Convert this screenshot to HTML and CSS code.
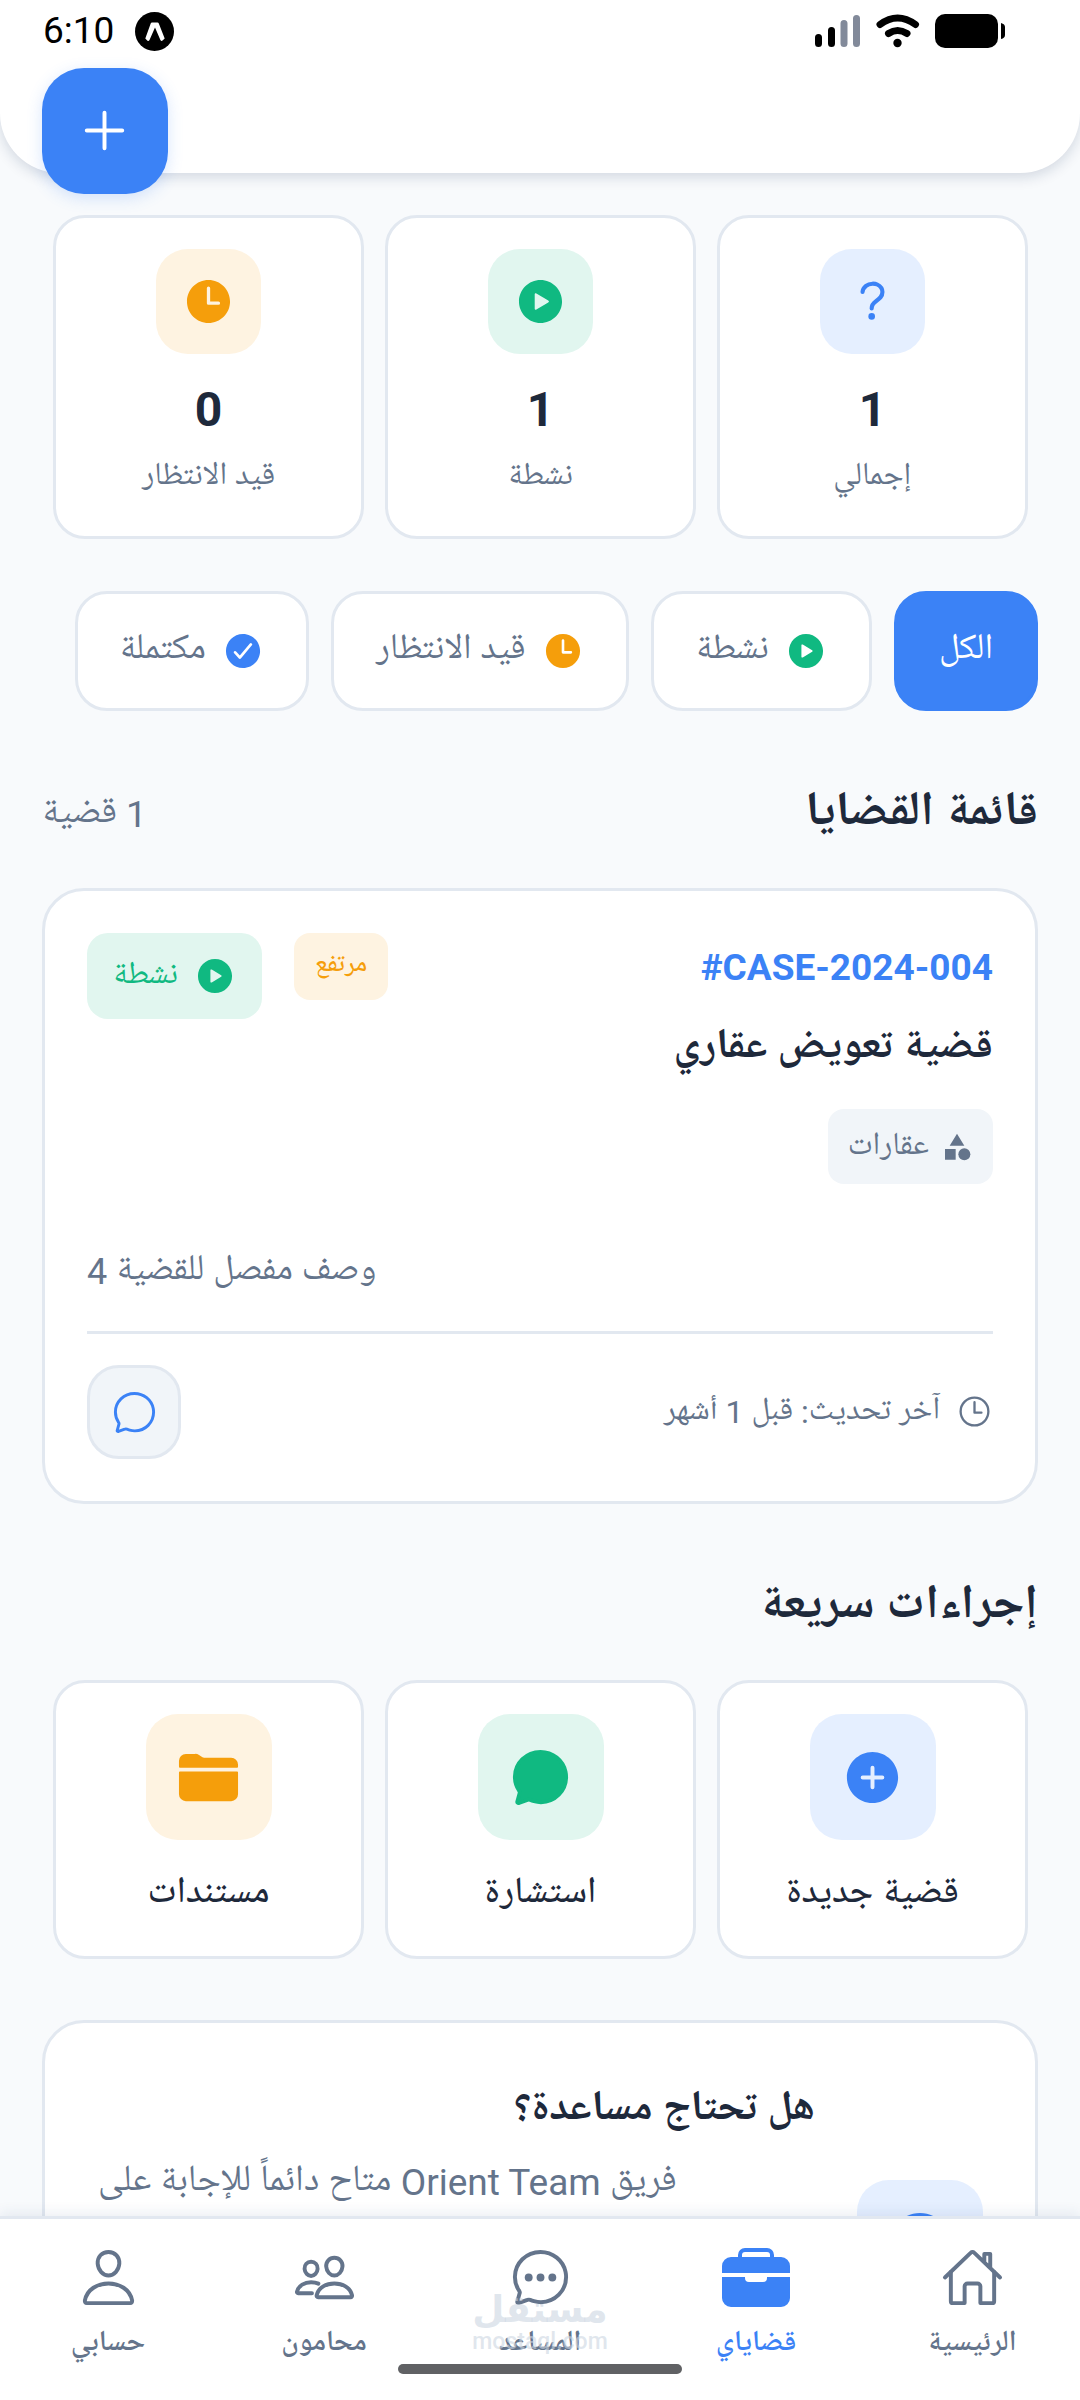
FILE: index.html
```html
<!DOCTYPE html>
<html lang="ar" dir="rtl">
<head>
<meta charset="utf-8">
<meta name="viewport" content="width=device-width, initial-scale=1">
<title>قضاياي</title>
<link rel="stylesheet" href="styles.css">
</head>
<body>
<svg class="sprite" aria-hidden="true">
  <symbol id="i-play" viewBox="0 0 512 512"><path fill="currentColor" d="M256,48C141.31,48,48,141.31,48,256s93.31,208,208,208,208-93.31,208-208S370.69,48,256,48Zm74.77,217.3L216.32,334.44a10.78,10.78,0,0,1-16.32-9.31V186.87a10.78,10.78,0,0,1,16.32-9.31L330.77,246.7A10.89,10.89,0,0,1,330.77,265.3Z"/></symbol>
  <symbol id="i-time" viewBox="0 0 512 512"><path fill="currentColor" d="M256,48C141.13,48,48,141.13,48,256s93.13,208,208,208,208-93.13,208-208S370.87,48,256,48Zm96,240H256a16,16,0,0,1-16-16V128a16,16,0,0,1,32,0V256h80a16,16,0,0,1,0,32Z"/></symbol>
  <symbol id="i-check" viewBox="0 0 512 512"><path fill="currentColor" d="M256,48C141.31,48,48,141.31,48,256s93.31,208,208,208,208-93.31,208-208S370.69,48,256,48ZM364.25,186.29l-134.4,160a16,16,0,0,1-12,5.71h-.27a16,16,0,0,1-11.89-5.3l-57.6-64a16,16,0,1,1,23.78-21.4l45.29,50.32L339.75,165.71a16,16,0,0,1,24.5,20.58Z"/></symbol>
  <symbol id="i-add-circle" viewBox="0 0 512 512"><path fill="currentColor" d="M256,48C141.31,48,48,141.31,48,256s93.31,208,208,208,208-93.31,208-208S370.69,48,256,48Zm80,224H272v64a16,16,0,0,1-32,0V272H176a16,16,0,0,1,0-32h64V176a16,16,0,0,1,32,0v64h64a16,16,0,0,1,0,32Z"/></symbol>
  <symbol id="i-folder" viewBox="0 0 512 512"><path fill="currentColor" d="M496,152a56,56,0,0,0-56-56H220.11a23.89,23.89,0,0,1-13.31-4L179,73.41A55.77,55.77,0,0,0,147.89,64H72A56,56,0,0,0,16,120v48a8,8,0,0,0,8,8H488a8,8,0,0,0,8-8ZM16,392a56,56,0,0,0,56,56H440a56,56,0,0,0,56-56V216a8,8,0,0,0-8-8H24a8,8,0,0,0-8,8Z"/></symbol>
  <symbol id="i-bubble" viewBox="0 0 512 512"><path stroke="currentColor" stroke-width="32" stroke-linecap="round" stroke-miterlimit="10" d="M87.49,380c1.19-4.38-1.44-10.47-3.95-14.86A44.86,44.86,0,0,0,81,361.34a199.81,199.81,0,0,1-33-110C47.65,139.09,140.73,48,255.83,48,356.21,48,440,117.54,459.58,209.85A199,199,0,0,1,464,251.49c0,112.41-89.49,204.93-204.59,204.93-18.3,0-43-4.6-56.47-8.37s-26.92-8.77-30.39-10.11a31.09,31.09,0,0,0-11.12-2.07,30.71,30.71,0,0,0-12.09,2.43L81.51,462.78A16,16,0,0,1,76.84,464a9.61,9.61,0,0,1-9.58-9.74,15.85,15.85,0,0,1,.6-3.29Z"/></symbol>
  <symbol id="i-time-o" viewBox="0 0 512 512"><g fill="none" stroke="currentColor" stroke-width="32"><circle cx="256" cy="256" r="192"/><path stroke-linecap="round" stroke-linejoin="round" d="M256 128v144h96"/></g></symbol>
  <symbol id="i-help" viewBox="0 0 512 512"><path fill="none" stroke="currentColor" stroke-width="40" stroke-linecap="round" d="M160 164s1.44-33 33.54-59.46C212.6 88.83 235.49 84.28 256 84c18.73-.23 35.47 2.94 45.48 7.82C318.59 100.2 352 120.6 352 164c0 45.67-29.18 66.37-62.35 89.18S248 298.36 248 324"/><circle fill="currentColor" cx="248" cy="400" r="32"/></symbol>
  <symbol id="i-add" viewBox="0 0 512 512"><path fill="none" stroke="currentColor" stroke-width="32" stroke-linecap="round" d="M256 112v288M400 256H112"/></symbol>
  <symbol id="i-category" viewBox="0 0 24 24"><path fill="currentColor" d="M12 2l-5.5 9h11zM3 13.5h8v8H3z"/><circle fill="currentColor" cx="17.5" cy="17.5" r="4.5"/></symbol>
  <symbol id="i-person" viewBox="0 0 512 512"><g fill="none" stroke="currentColor" stroke-width="32" stroke-linecap="round" stroke-linejoin="round"><path d="M344,144c-3.92,52.87-44,96-88,96s-84.15-43.12-88-96c-4-55,35-96,88-96S348,90,344,144Z"/><path d="M256,304c-87,0-175.3,48-191.64,138.6C62.39,453.52,68.57,464,80,464H432c11.44,0,17.62-10.48,15.65-21.4C431.3,352,343,304,256,304Z"/></g></symbol>
  <symbol id="i-people" viewBox="0 0 512 512"><g fill="none" stroke="currentColor" stroke-width="32" stroke-linecap="round" stroke-linejoin="round"><path d="M402,168c-2.93,40.67-33.1,72-66,72s-63.12-31.32-66-72c-3-42.31,26.37-72,66-72S405,126.46,402,168Z"/><path d="M336,304c-65.17,0-127.84,32.37-143.54,95.41-2.08,8.34,3.15,16.59,11.72,16.59H467.83c8.57,0,13.77-8.25,11.72-16.59C463.85,335.36,401.18,304,336,304Z"/><path d="M200,185.94C197.66,218.42,173.28,244,147,244S96.3,218.43,94,185.94C91.61,152.15,115.34,128,147,128S202.39,152.77,200,185.94Z"/><path d="M206,306c-18.05-8.27-37.93-11.45-59-11.45-52,0-102.1,25.85-114.65,76.2C30.7,377.41,34.88,384,41.72,384H154"/></g></symbol>
  <symbol id="i-home" viewBox="0 0 512 512"><g fill="none" stroke="currentColor" stroke-width="32" stroke-linecap="round" stroke-linejoin="round"><path d="M80 212v236a16 16 0 0016 16h96V328a24 24 0 0124-24h80a24 24 0 0124 24v136h96a16 16 0 0016-16V212"/><path d="M480 256L266.89 52c-5-5.28-16.69-5.34-21.78 0L32 256M400 179V64h-48v69"/></g></symbol>
  <symbol id="i-briefcase" viewBox="0 0 68 59"><path fill="none" stroke="currentColor" stroke-width="4" d="M18 10V7a5 5 0 015-5h22a5 5 0 015 5v3"/><path fill="currentColor" d="M9 9h50a9 9 0 019 9v7H0v-7a9 9 0 019-9ZM0 29h23v1a4 4 0 004 4h14a4 4 0 004-4v-1h23v21a9 9 0 01-9 9H9a9 9 0 01-9-9Z"/></symbol>
</svg>

<div class="app">
  <header class="header">
    <div class="status" dir="ltr">
      <span class="clock">6:10</span>
      <svg class="expo" viewBox="0 0 39 39"><circle cx="19.500" cy="19.500" r="19.500"/><path fill="#fff" d="M17 10.500h5.500q.9 0 1.300 1l5.900 15-2.500 2.300q-1 .5-1.800-.8L20 15.500 14.500 28q-.8 1.400-2 .7L10.300 26.500 15.700 11.500q.4-1 1.300-1z"/></svg>
      <svg class="system" viewBox="0 0 190 36">
        <g stroke-width="7" stroke-linecap="round"><path stroke="#000" d="M3.500 23.500v6M16.500 16.500v13"/><path stroke="#828a9a" d="M29 9.500v20M41.500 4.500v25"/></g>
        <g fill="none" stroke="#000" stroke-width="7" stroke-linecap="round"><path d="M65 10.500q17.500-13 35.500 0M73.500 19.500q9-6 18.500 0"/></g>
        <circle cx="82.500" cy="29" r="4.200"/>
        <rect x="120" y="0" width="63" height="34" rx="10"/><path d="M186 9q4 1 4 4v8q0 3-4 4z"/>
      </svg>
    </div>
    <button class="fab" type="button" aria-label="إضافة قضية"><svg class="icon-63"><use href="#i-add"/></svg></button>
  </header>

  <main class="content">
    <section class="tiles">
      <div class="tile">
        <span class="bubble blue"><svg class="icon-53"><use href="#i-help"/></svg></span>
        <strong class="tile-value">1</strong><span class="tile-label">إجمالي</span>
      </div>
      <div class="tile">
        <span class="bubble green"><svg class="icon-53"><use href="#i-play"/></svg></span>
        <strong class="tile-value">1</strong><span class="tile-label">نشطة</span>
      </div>
      <div class="tile">
        <span class="bubble amber"><svg class="icon-53"><use href="#i-time"/></svg></span>
        <strong class="tile-value">0</strong><span class="tile-label">قيد الانتظار</span>
      </div>
    </section>

    <div class="filters">
      <button class="filter filter-active" type="button">الكل</button>
      <button class="filter" type="button"><svg class="icon-42 ink-green"><use href="#i-play"/></svg>نشطة</button>
      <button class="filter" type="button"><svg class="icon-42 ink-amber"><use href="#i-time"/></svg>قيد الانتظار</button>
      <button class="filter" type="button"><svg class="icon-42 ink-blue"><use href="#i-check"/></svg>مكتملة</button>
    </div>

    <div class="section-head">
      <h2 class="section-title">قائمة القضايا</h2>
      <span class="count">1 قضية</span>
    </div>

    <article class="card">
      <div class="case-top">
        <div class="case-info">
          <span class="case-number" dir="ltr">#CASE-2024-004</span>
          <h3 class="case-title">قضية تعويض عقاري</h3>
          <span class="category"><svg class="icon-32"><use href="#i-category"/></svg>عقارات</span>
        </div>
        <div class="badges">
          <span class="priority">مرتفع</span>
          <span class="state"><svg class="icon-42"><use href="#i-play"/></svg>نشطة</span>
        </div>
      </div>
      <p class="case-text">وصف مفصل للقضية 4</p>
      <div class="case-foot">
        <span class="updated"><svg class="icon-37"><use href="#i-time-o"/></svg>آخر تحديث: قبل 1 أشهر</span>
        <button class="chat" type="button" aria-label="محادثة"><svg class="icon-47" fill="none"><use href="#i-bubble"/></svg></button>
      </div>
    </article>

    <h2 class="section-title actions-title">إجراءات سريعة</h2>

    <section class="tiles">
      <button class="tile" type="button"><span class="bubble bubble-lg blue"><svg class="icon-63"><use href="#i-add-circle"/></svg></span><span class="action-label">قضية جديدة</span></button>
      <button class="tile" type="button"><span class="bubble bubble-lg green"><svg class="icon-63" fill="currentColor"><use href="#i-bubble"/></svg></span><span class="action-label">استشارة</span></button>
      <button class="tile" type="button"><span class="bubble bubble-lg amber"><svg class="icon-63"><use href="#i-folder"/></svg></span><span class="action-label">مستندات</span></button>
    </section>

    <section class="card help">
      <span class="bubble bubble-lg blue"><svg class="icon-74"><use href="#i-check"/></svg></span>
      <div class="help-body">
        <h3 class="case-title">هل تحتاج مساعدة؟</h3>
        <p class="help-text">فريق Orient Team متاح دائماً للإجابة على</p>
      </div>
    </section>
  </main>

  <nav class="tabs">
    <a class="tab" href="#"><svg class="icon-63"><use href="#i-home"/></svg>الرئيسية</a>
    <a class="tab tab-active" href="#" aria-current="page"><svg class="icon-case"><use href="#i-briefcase"/></svg>قضاياي</a>
    <a class="tab" href="#"><svg class="icon-63" viewBox="0 0 512 512" fill="none"><use href="#i-bubble"/><g fill="currentColor"><circle cx="160" cy="256" r="32"/><circle cx="256" cy="256" r="32"/><circle cx="352" cy="256" r="32"/></g></svg>المساعد</a>
    <a class="tab" href="#"><svg class="icon-63"><use href="#i-people"/></svg>محامون</a>
    <a class="tab" href="#"><svg class="icon-63"><use href="#i-person"/></svg>حسابي</a>
    <div class="watermark" aria-hidden="true"><span class="watermark-ar">مستقل</span><span class="watermark-en" dir="ltr">mostaql.com</span></div>
    <span class="home-bar"></span>
  </nav>
</div>
</body>
</html>
```

FILE: styles.css
```css
* { box-sizing: border-box; }
body, h2, h3, p { margin: 0; }
body {
  background: #f8fafc;
  color: #1e293b;
  font-family: Roboto, "Noto Naskh Arabic UI", "Noto Naskh Arabic", "Noto Sans", sans-serif;
  font-size: 37px;
}
button { font: inherit; color: inherit; cursor: pointer; }
.sprite { position: absolute; width: 0; height: 0; }
svg { display: block; flex: none; }

.icon-32 { width: 32px; height: 32px; }
.icon-37 { width: 37px; height: 37px; }
.icon-42 { width: 42px; height: 42px; }
.icon-47 { width: 47px; height: 47px; }
.icon-53 { width: 53px; height: 53px; }
.icon-63 { width: 63px; height: 63px; }
.icon-74 { width: 74px; height: 74px; }
.icon-case { width: 68px; height: 63px; }
.ink-green { color: #10b981; }
.ink-amber { color: #f59e0b; }
.ink-blue { color: #3b82f6; }

.app { display: flex; flex-direction: column; height: 100vh; }

/* Header */
.header {
  position: relative;
  z-index: 2;
  flex: none;
  height: 173px;
  background: #fff;
  border-radius: 0 0 60px 60px;
  box-shadow: 0 4px 14px rgba(15, 40, 80, .16);
}
.status { display: flex; align-items: flex-start; padding: 12px 75px 0 43px; color: #000; }
.clock { line-height: 38px; }
.expo { width: 39px; height: 39px; margin-left: 21px; }
.system { width: 190px; height: 36px; margin: 2px 0 0 auto; }
.fab {
  position: absolute;
  left: 42px;
  top: 68px;
  display: grid;
  place-items: center;
  width: 126px;
  height: 126px;
  padding: 0 2px 2px 0;
  border: 0;
  border-radius: 42px;
  background: #3b82f6;
  color: #fff;
  box-shadow: 0 4px 16px rgba(59, 130, 246, .2);
}

.content { flex: 1; min-height: 0; overflow: hidden; padding: 42px 42px 0; }

.tiles { display: grid; grid-template-columns: repeat(3, 1fr); gap: 21px; padding: 0 10px 0 11px; }
.tile {
  display: flex;
  flex-direction: column;
  align-items: center;
  padding: 31px 10px 29px;
  border: 3px solid #e2e8f0;
  border-radius: 32px;
  background: #fff;
}
.bubble { display: grid; place-items: center; flex: none; width: 105px; height: 105px; border-radius: 32px; }
.bubble-lg { width: 126px; height: 126px; }
.blue { background: #e5efff; color: #3b82f6; }
.green { background: #e1f6ef; color: #10b981; }
.amber { background: #fef3e1; color: #f59e0b; }
.tile-value { margin-top: 28px; font-size: 48px; line-height: 56px; }
.tile-label { margin-top: 9px; font-size: 32px; line-height: 60px; color: #64748b; }
.action-label { margin-top: 22px; line-height: 65px; font-weight: 500; }

.filters { display: flex; gap: 22px; margin-top: 52px; }
.filter {
  display: flex;
  align-items: center;
  gap: 16px;
  height: 120px;
  padding: 0 42px 3px;
  border: 3px solid #e2e8f0;
  border-radius: 32px;
  background: #fff;
  color: #64748b;
  font-size: 36px;
}
.filter-active { border-color: #3b82f6; background: #3b82f6; color: #fff; }

/* Icons sit slightly below the centre line of the text beside them */
.filter svg, .state svg, .category svg, .updated svg { margin-top: 3px; }

.section-head { display: flex; align-items: center; justify-content: space-between; margin-top: 68px; }
.section-title { font-size: 48px; line-height: 72px; }
.count { color: #64748b; line-height: 56px; }

.card { border: 3px solid #e2e8f0; border-radius: 42px; background: #fff; padding: 42px; }
.section-head + .card { margin-top: 37px; }
.case-top { display: flex; justify-content: space-between; align-items: flex-start; }
.case-info { display: flex; flex-direction: column; align-items: flex-start; }
.case-number { line-height: 70px; font-weight: 700; color: #3b82f6; }
.case-title { margin-top: 10px; font-size: 42px; line-height: 72px; }
.category {
  display: flex;
  align-items: center;
  gap: 12px;
  height: 75px;
  margin-top: 24px;
  padding: 0 20px 3px;
  border-radius: 16px;
  background: #f1f5f9;
  color: #64748b;
  font-size: 32px;
}
.badges { display: flex; align-items: flex-start; gap: 32px; }
.priority {
  height: 67px;
  padding: 0 21px;
  border-radius: 16px;
  background: #fef3e1;
  color: #f59e0b;
  font-size: 26px;
  line-height: 66px;
  font-weight: 500;
}
.state {
  display: flex;
  align-items: center;
  gap: 16px;
  height: 86px;
  padding: 0 26px 3px;
  border-radius: 21px;
  background: #e1f6ef;
  color: #10b981;
  font-size: 32px;
}
.case-text { margin-top: 58px; font-size: 36px; line-height: 60px; color: #64748b; text-align: left; }
.case-foot {
  display: flex;
  align-items: center;
  justify-content: space-between;
  margin-top: 29px;
  padding-top: 31px;
  border-top: 3px solid #e2e8f0;
}
.updated { display: flex; align-items: center; gap: 16px; padding-bottom: 4px; font-size: 32px; color: #64748b; }
.chat {
  display: grid;
  place-items: center;
  width: 94px;
  height: 94px;
  padding: 0;
  border: 3px solid #e2e8f0;
  border-radius: 32px;
  background: #f1f5f9;
  color: #3b82f6;
}

.actions-title { margin: 68px 0 36px; }

.help { display: flex; align-items: center; gap: 42px; min-height: 446px; margin-top: 61px; padding-right: 52px; }
.help-body { flex: 1; align-self: flex-start; }
.help-text { padding-left: 11px; line-height: 72px; color: #64748b; text-align: left; }

/* Tab bar */
.tabs {
  position: relative;
  z-index: 2;
  flex: none;
  display: flex;
  height: 184px;
  border-top: 3px solid #e2e8f0;
  background: #fff;
  box-shadow: 0 -4px 12px rgba(30, 60, 110, .08);
}
.tab {
  flex: 1;
  display: flex;
  flex-direction: column;
  align-items: center;
  padding-top: 27px;
  color: #64748b;
  font-size: 29px;
  font-weight: 600;
  line-height: 70px;
  text-decoration: none;
}
.tab-active { color: #3b82f6; }
.watermark {
  position: absolute;
  inset: 70px 0 auto;
  display: flex;
  flex-direction: column;
  align-items: center;
  color: rgba(203, 213, 225, .6);
  pointer-events: none;
}
.watermark-ar { font-family: "DejaVu Sans", sans-serif; font-size: 37px; line-height: 42px; font-weight: 700; }
.watermark-en { font-size: 23px; line-height: 22px; font-weight: 500; }
.home-bar {
  position: absolute;
  left: 50%;
  bottom: 26px;
  width: 284px;
  height: 10px;
  margin-left: -142px;
  border-radius: 5px;
  background: #606164;
}
```
